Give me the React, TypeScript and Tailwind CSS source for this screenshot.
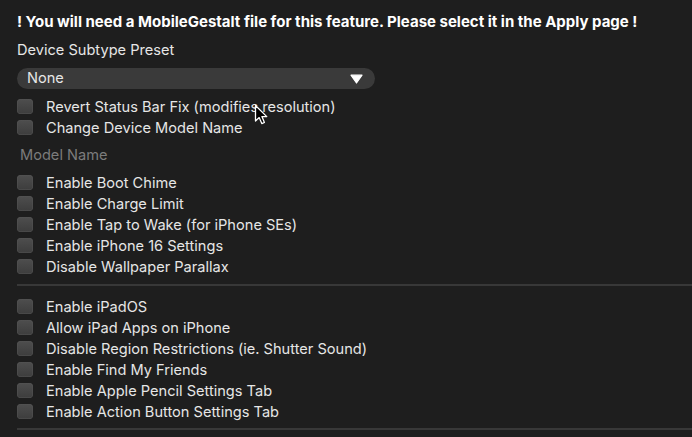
import React from "react";

const groupOne = [
  "Enable Boot Chime",
  "Enable Charge Limit",
  "Enable Tap to Wake (for iPhone SEs)",
  "Enable iPhone 16 Settings",
  "Disable Wallpaper Parallax",
];

const groupTwo = [
  "Enable iPadOS",
  "Allow iPad Apps on iPhone",
  "Disable Region Restrictions (ie. Shutter Sound)",
  "Enable Find My Friends",
  "Enable Apple Pencil Settings Tab",
  "Enable Action Button Settings Tab",
];

const CheckRow = ({ label }: { label: string }) => (
  <label className="flex h-[21px] items-center gap-[13px]">
    <span className="h-[15px] w-[16px] shrink-0 rounded-[4px] bg-gradient-to-b from-[#4e4e4e] to-[#3d3d3d] shadow-[inset_0_0_0_0.5px_#555]" />
    <span className="pt-[1px] text-[14.6px] leading-[21px] text-[#e6e6e6]">{label}</span>
  </label>
);

const Cursor = () => (
  <svg
    className="absolute left-[254px] top-[104px]"
    width="16"
    height="22"
    viewBox="0 0 16 22"
  >
    <path
      d="M1.5 1.5 L1.5 17 L5.2 13.6 L7.8 19.6 L10.4 18.5 L7.9 12.6 L12.8 12.6 Z"
      fill="#000"
      stroke="#fff"
      strokeWidth="1.3"
      strokeLinejoin="round"
    />
  </svg>
);

export default function App() {
  return (
    <div
      className="relative h-[437px] w-[692px] overflow-hidden bg-[#1e1e1e] pl-[17px] pt-[12px] text-[#e6e6e6]"
      style={{ fontFamily: "Inter, 'Noto Sans', sans-serif" }}
    >
      {/* Warning */}
      <div className="text-[15px] font-bold leading-[20px] text-white">
        ! You will need a MobileGestalt file for this feature. Please select it in the Apply page !
      </div>

      <div className="mt-[8px] text-[14.6px] leading-[20px]">Device Subtype Preset</div>

      {/* Dropdown */}
      <div className="mt-[8px] flex h-[21px] w-[358px] items-center justify-between rounded-full bg-[#3a3a3a] pl-[10px] pr-[12px]">
        <span className="text-[14.6px] leading-[21px] text-[#e6e6e6]">None</span>
        <svg width="13" height="10" viewBox="0 0 13 10">
          <path d="M1 1.2 L12 1.2 L6.5 9 Z" fill="#fff" stroke="#fff" strokeWidth="1.2" strokeLinejoin="round" />
        </svg>
      </div>

      <div className="mt-[7px] flex flex-col">
        <CheckRow label="Revert Status Bar Fix (modifies resolution)" />
        <CheckRow label="Change Device Model Name" />
      </div>

      <div className="mt-[7px] pl-[3px] text-[14.6px] leading-[20px] text-[#7c7c7c]">Model Name</div>

      <div className="mt-[7px] flex flex-col">
        {groupOne.map((l) => (
          <CheckRow key={l} label={l} />
        ))}
      </div>

      <div className="mt-[7px] h-[2px] bg-[#383838]" />

      <div className="mt-[10px] flex flex-col">
        {groupTwo.map((l) => (
          <CheckRow key={l} label={l} />
        ))}
      </div>

      <div className="mt-[6px] h-[2px] bg-[#383838]" />

      <Cursor />
    </div>
  );
}
